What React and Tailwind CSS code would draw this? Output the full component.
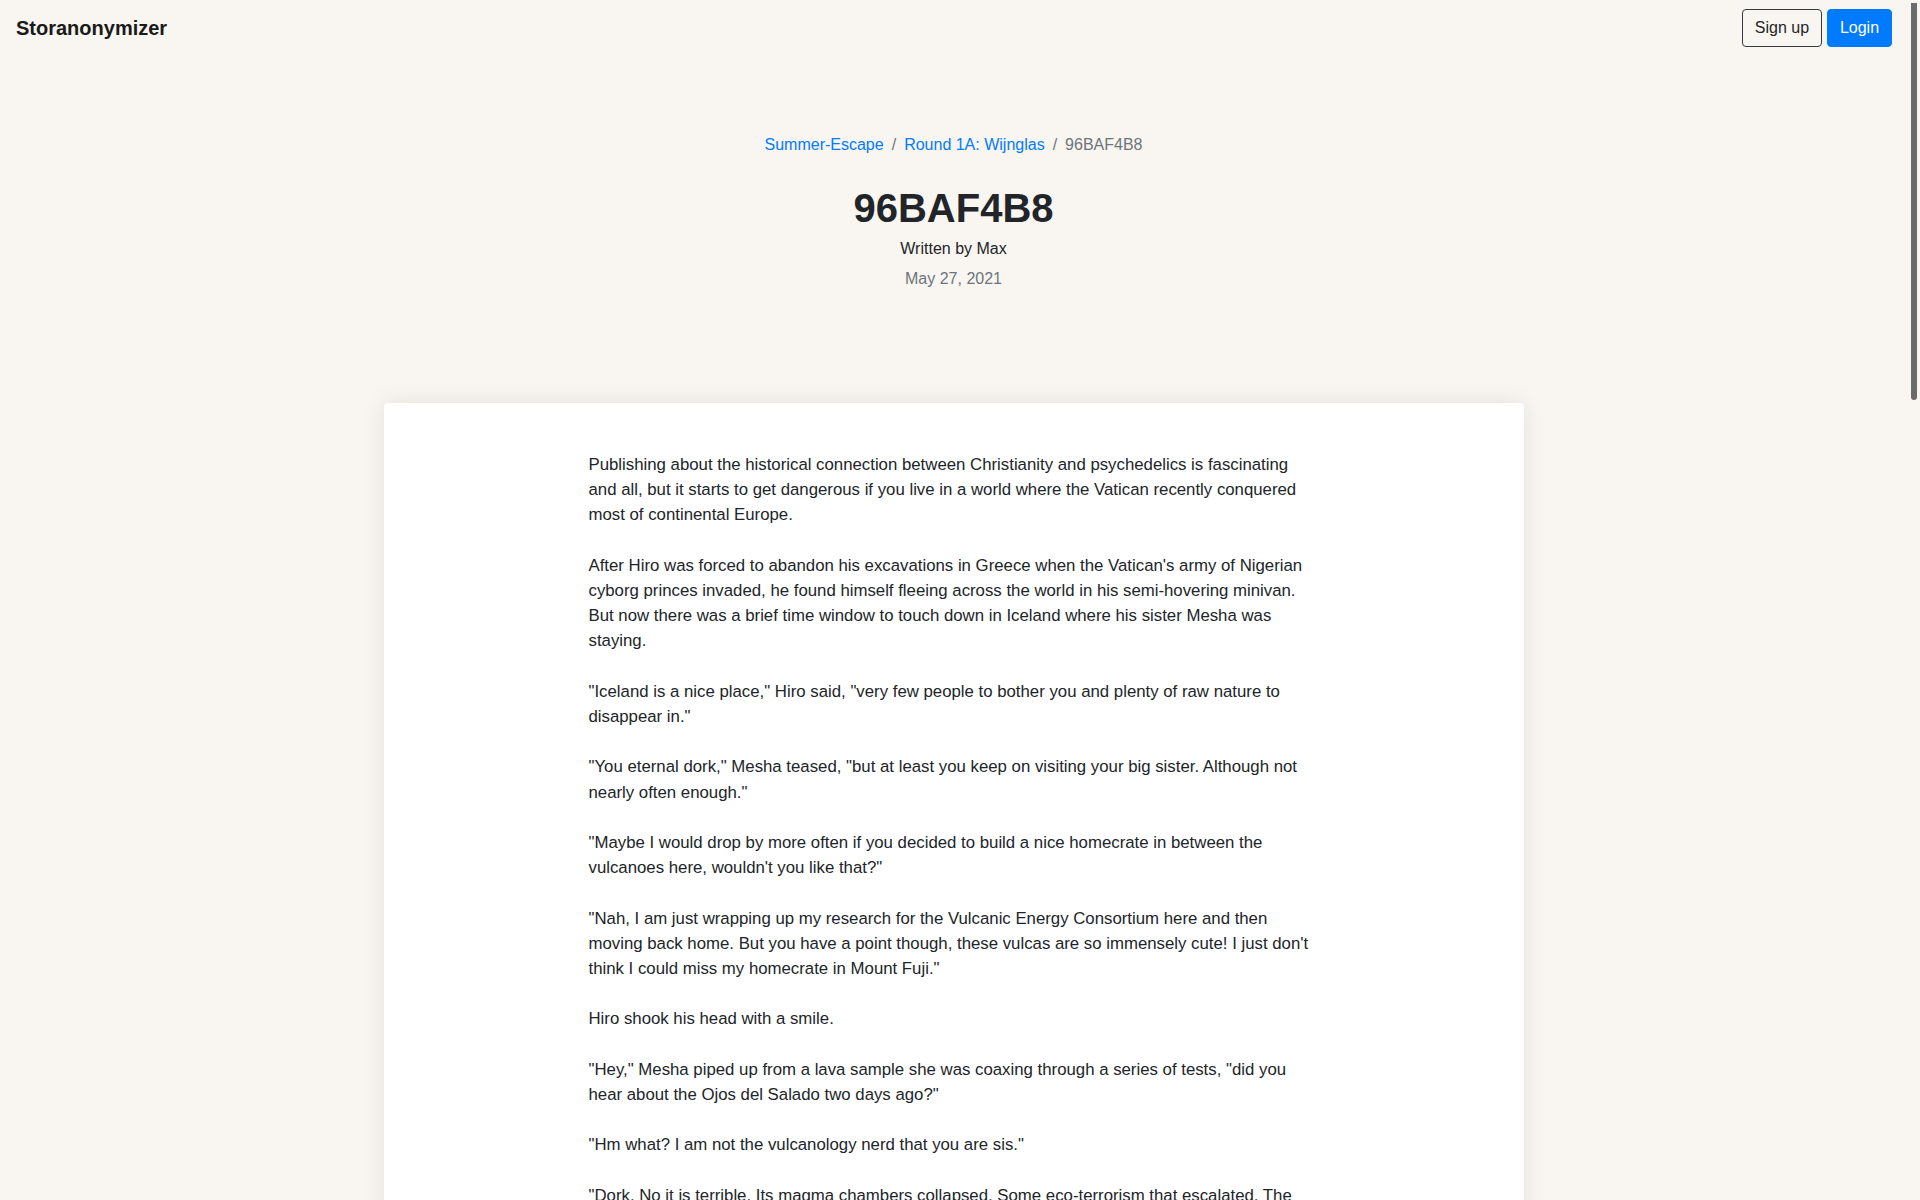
import React from "react";

const paragraphs = [
  "Publishing about the historical connection between Christianity and psychedelics is fascinating and all, but it starts to get dangerous if you live in a world where the Vatican recently conquered most of continental Europe.",
  "After Hiro was forced to abandon his excavations in Greece when the Vatican's army of Nigerian cyborg princes invaded, he found himself fleeing across the world in his semi-hovering minivan. But now there was a brief time window to touch down in Iceland where his sister Mesha was staying.",
  "\"Iceland is a nice place,\" Hiro said, \"very few people to bother you and plenty of raw nature to disappear in.\"",
  "\"You eternal dork,\" Mesha teased, \"but at least you keep on visiting your big sister. Although not nearly often enough.\"",
  "\"Maybe I would drop by more often if you decided to build a nice homecrate in between the vulcanoes here, wouldn't you like that?\"",
  "\"Nah, I am just wrapping up my research for the Vulcanic Energy Consortium here and then moving back home. But you have a point though, these vulcas are so immensely cute! I just don't think I could miss my homecrate in Mount Fuji.\"",
  "Hiro shook his head with a smile.",
  "\"Hey,\" Mesha piped up from a lava sample she was coaxing through a series of tests, \"did you hear about the Ojos del Salado two days ago?\"",
  "\"Hm what? I am not the vulcanology nerd that you are sis.\"",
  "\"Dork. No it is terrible. Its magma chambers collapsed. Some eco-terrorism that escalated. The whole mountain caved in on itself and took half of the surrounding valleys with it.\"",
  "\"That sounds awful,\" Hiro said, frowning as he leaned over her shoulder to look at the readings on her screen.",
  "\"It is. And the worst part is that nobody seems to know who was behind it. The Consortium is furious, and they have asked me to look into it once I am done here.\"",
  "Hiro nodded slowly. Somewhere in the distance a geyser erupted, sending a plume of steam high into the pale northern sky.",
  "\"Well,\" he said eventually, \"if you need a driver with a semi-hovering minivan, you know where to find me.\"",
  "Mesha laughed and punched him in the shoulder. \"You eternal dork.\"",
];

export default function App() {
  return (
    <div
      className="flex items-start min-h-screen bg-[#f9f5f0] text-[#212529]"
      style={{ fontFamily: '"Liberation Sans", Arial, sans-serif' }}
    >
      <div className="w-[1907px] shrink-0">
        <nav className="flex items-center justify-between h-[56px] pl-[16px] pr-[15px]">
          <span className="text-[20px] font-bold text-[#1a1a1a]">Storanonymizer</span>
          <div className="flex items-center gap-[5px]">
            <button className="h-[38px] w-[80px] rounded-[4px] border border-[#343a40] text-[16px] text-[#212529] bg-transparent">
              Sign up
            </button>
            <button className="h-[38px] w-[65px] rounded-[4px] border border-[#007bff] bg-[#007bff] text-[16px] text-white">
              Login
            </button>
          </div>
        </nav>

        <header className="flex flex-col items-center pt-[77px]">
          <div className="flex items-center text-[16px] leading-[24px]">
            <a className="text-[#007bff]">Summer-Escape</a>
            <span className="px-[8px] text-[#6c757d]">/</span>
            <a className="text-[#007bff]">Round 1A: Wijnglas</a>
            <span className="px-[8px] text-[#6c757d]">/</span>
            <span className="text-[#6c757d]">96BAF4B8</span>
          </div>
          <h1 className="mt-[27px] text-[40px] leading-[48px] font-bold text-[#212529]">96BAF4B8</h1>
          <div className="mt-[5px] text-[16px] leading-[24px] text-[#212529]">Written by Max</div>
          <div className="mt-[6px] text-[16px] leading-[24px] text-[#6c757d]">May 27, 2021</div>
        </header>

        <main className="mt-[112px] flex justify-center pb-[60px]">
          <article className="w-[1140px] rounded-[4px] bg-white shadow-[0_0_24px_rgba(0,0,0,0.09)] pt-[49px] pb-[48px]">
            <div className="mx-auto w-[730px] text-[16.8px] leading-[25.2px] text-[#212529]">
              {paragraphs.map((p, i) => (
                <p key={i} className="mb-[25.2px]">
                  {p}
                </p>
              ))}
            </div>
          </article>
        </main>
      </div>
      <aside className="w-[13px] shrink-0 pt-[3px] pl-[4px]">
        <div className="w-[6px] h-[397px] rounded-b-[3px] bg-[#6b6b6b]" />
      </aside>
    </div>
  );
}
